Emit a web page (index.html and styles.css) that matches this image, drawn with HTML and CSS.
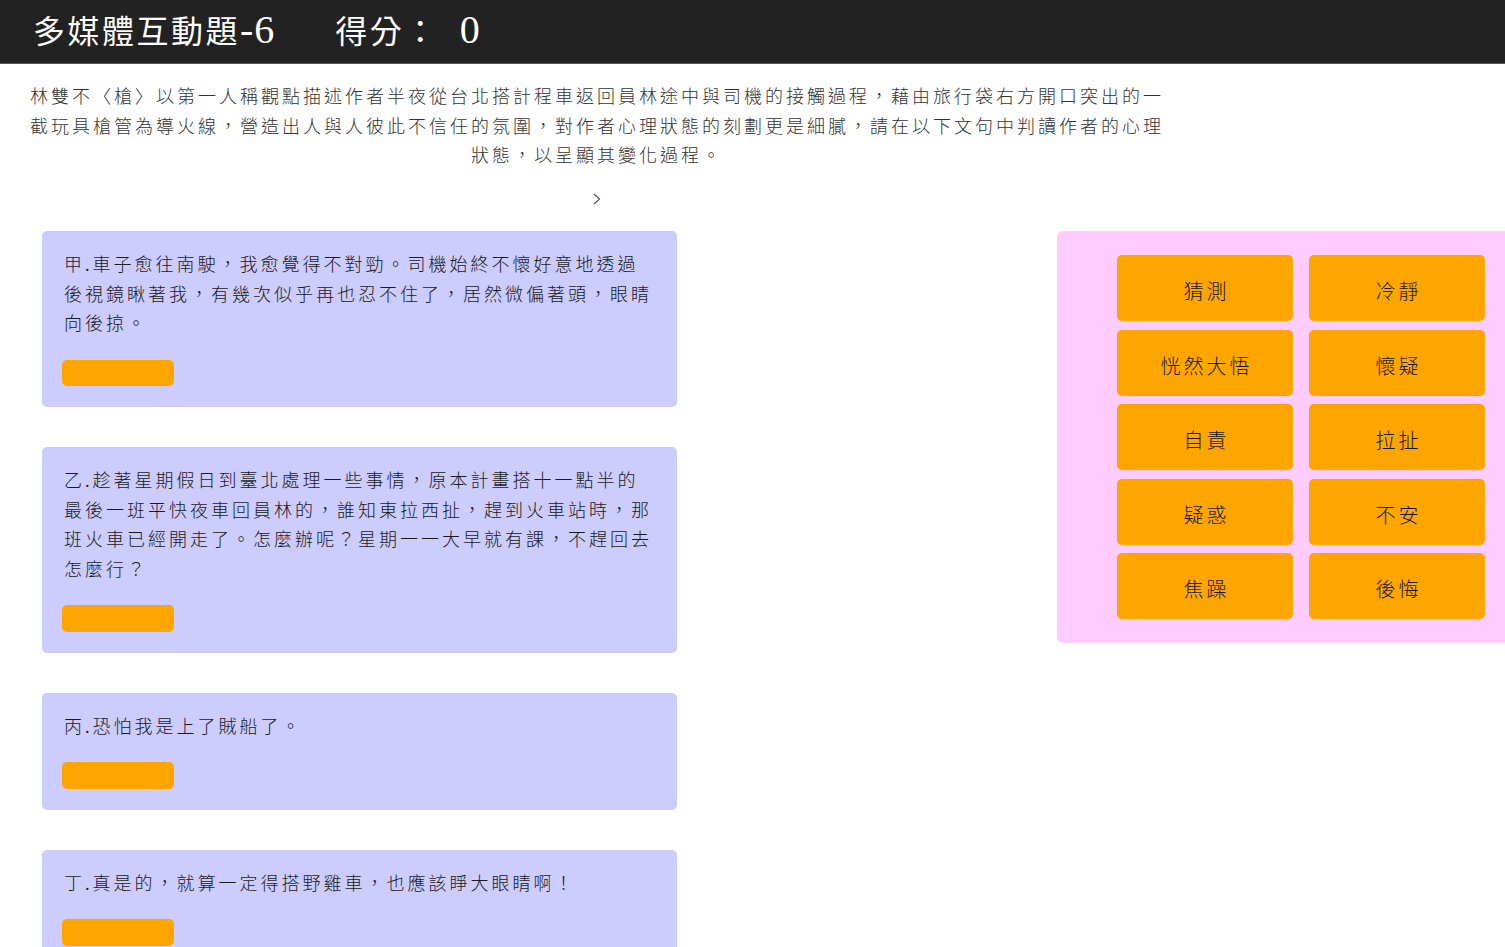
FILE: index.html
```html
<!DOCTYPE html>
<html lang="zh-Hant">
<head>
<meta charset="utf-8">
<title>多媒體互動題-6</title>
<link rel="stylesheet" href="styles.css">
</head>
<body>
<header class="topbar">
  <h1 class="title">多媒體互動題<span class="num">-6</span><span class="score">得分：<span class="num score-num">0</span></span></h1>
</header>
<main class="page">
  <section class="intro">
    <p class="intro-text">林雙不〈槍〉以第一人稱觀點描述作者半夜從台北搭計程車返回員林途中與司機的接觸過程，藉由旅行袋右方開口突出的一截玩具槍管為導火線，營造出人與人彼此不信任的氛圍，對作者心理狀態的刻劃更是細膩，請在以下文句中判讀作者的心理狀態，以呈顯其變化過程。</p>
    <div class="arrow"><svg class="chevron" width="8" height="12" viewBox="0 0 8 12"><polyline points="1,1 6.5,6 1,11" fill="none" stroke="#555" stroke-width="1.2"/></svg></div>
  </section>
  <section class="board">
    <div class="cards">
      <div class="card">
        <p class="card-text">甲.車子愈往南駛，我愈覺得不對勁。司機始終不懷好意地透過後視鏡瞅著我，有幾次似乎再也忍不住了，居然微偏著頭，眼睛向後掠。</p>
        <div class="slot"></div>
      </div>
      <div class="card">
        <p class="card-text">乙.趁著星期假日到臺北處理一些事情，原本計畫搭十一點半的最後一班平快夜車回員林的，誰知東拉西扯，趕到火車站時，那班火車已經開走了。怎麼辦呢？星期一一大早就有課，不趕回去怎麼行？</p>
        <div class="slot"></div>
      </div>
      <div class="card">
        <p class="card-text">丙.恐怕我是上了賊船了。</p>
        <div class="slot"></div>
      </div>
      <div class="card">
        <p class="card-text">丁.真是的，就算一定得搭野雞車，也應該睜大眼睛啊！</p>
        <div class="slot"></div>
      </div>
    </div>
    <div class="options">
      <div class="option">猜測</div>
      <div class="option">冷靜</div>
      <div class="option">恍然大悟</div>
      <div class="option">懷疑</div>
      <div class="option">自責</div>
      <div class="option">拉扯</div>
      <div class="option">疑惑</div>
      <div class="option">不安</div>
      <div class="option">焦躁</div>
      <div class="option">後悔</div>
    </div>
  </section>
</main>
</body>
</html>
```
FILE: styles.css
```css
html, body {
  margin: 0;
  padding: 0;
  background: #ffffff;
  overflow-x: hidden;
}

body {
  font-family: "Liberation Serif", "Noto Sans CJK TC", serif;
  color: #222;
}

.topbar {
  background: #222222;
  height: 64px;
  box-sizing: border-box;
  border-bottom: 1px solid #555;
  display: flex;
  align-items: center;
  padding-left: 33px;
  padding-bottom: 4px;
}

.title {
  margin: 0;
  font-weight: normal;
  font-size: 32px;
  letter-spacing: 2.5px;
  color: #ffffff;
  line-height: 1;
  display: flex;
  align-items: baseline;
}

.num {
  font-size: 40px;
  letter-spacing: 1px;
}

.score {
  margin-left: 60px;
  display: flex;
  align-items: baseline;
}

.score-num {
  margin-left: 21px;
}

.page {
  width: 1505px;
}

.intro {
  width: 1140px;
  margin-left: 27px;
  padding-top: 19px;
  text-align: center;
}

.intro-text {
  margin: 0;
  font-size: 18px;
  line-height: 29.5px;
  letter-spacing: 3px;
  color: #333;
  font-weight: 300;
}

.arrow {
  margin-top: 13px;
  height: 29.5px;
  display: flex;
  align-items: center;
  justify-content: center;
}

.chevron {
  display: block;
}

.board {
  display: flex;
  align-items: flex-start;
  padding-left: 42px;
  margin-top: 17px;
}

.cards {
  width: 635px;
  display: flex;
  flex-direction: column;
  gap: 40px;
}

.card {
  background: #ccccff;
  border-radius: 5px;
  padding: 20px 22px 21px 22px;
}

.card-text {
  margin: 0;
  font-size: 18px;
  line-height: 29.5px;
  letter-spacing: 3px;
  color: #1a1a1a;
  font-weight: 300;
}

.slot {
  margin-top: 20px;
  margin-left: -2px;
  width: 112px;
  height: 26.5px;
  background: #ffa500;
  border-radius: 5px;
}

.options {
  margin-left: 380px;
  width: 448px;
  box-sizing: border-box;
  background: #ffccff;
  border-radius: 6px 0 0 6px;
  padding: 24px 20px 24px 60px;
  display: grid;
  grid-template-columns: 176px 176px;
  column-gap: 16px;
  row-gap: 8.5px;
}

.option {
  height: 66px;
  background: #ffa500;
  border-radius: 5px;
  display: flex;
  align-items: center;
  justify-content: center;
  font-size: 20px;
  letter-spacing: 3px;
  padding-left: 3px;
  padding-top: 5px;
  box-sizing: border-box;
  color: #1a1a1a;
  font-weight: 300;
}
```
